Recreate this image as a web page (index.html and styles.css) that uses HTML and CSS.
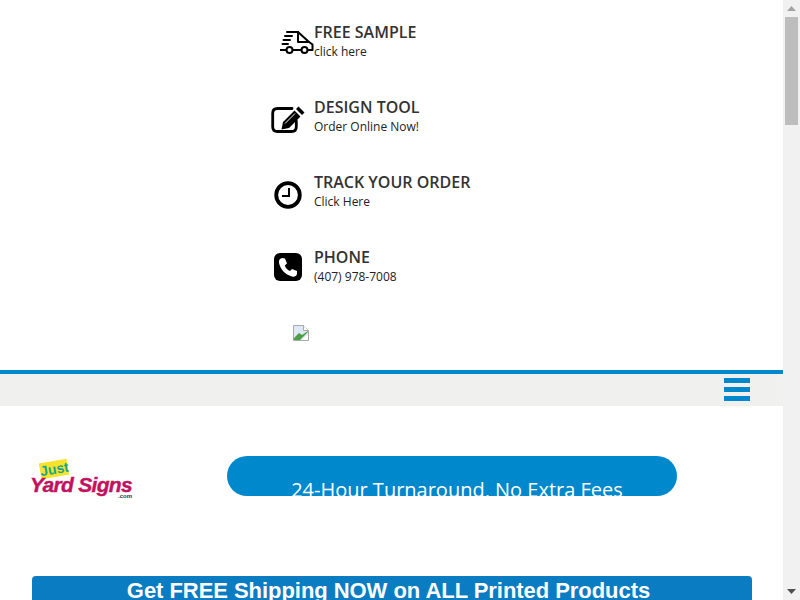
FILE: index.html
```html
<!DOCTYPE html>
<html lang="en">
<head>
    <meta charset="UTF-8">
    <meta name="viewport" content="width=device-width, initial-scale=1.0">
    <title>Just Yard Signs</title>
    <link rel="stylesheet" href="styles.css">
</head>
<body>
    <header class="top-links">
        <a class="top-link" href="#">
            <span class="top-icon top-icon-truck">
                <svg width="34" height="24" viewBox="0 0 34 24" fill="none" stroke="#000" stroke-width="2" stroke-linecap="round" stroke-linejoin="round">
                    <path d="M7 2H18L29 12L32.5 14.5V20H28.5"/>
                    <path d="M18 2V12H29"/>
                    <path d="M5 6H12M3.5 10H10M2.5 14H8"/>
                    <path d="M0.5 20H6M13 20H20.5"/>
                    <circle cx="9.5" cy="20" r="3"/>
                    <circle cx="24.5" cy="20" r="3"/>
                </svg>
            </span>
            <span class="top-text">
                <span class="top-title">FREE SAMPLE</span>
                <span class="top-sub">click here</span>
            </span>
        </a>
        <a class="top-link" href="#">
            <span class="top-icon top-icon-edit">
                <svg width="34" height="27" viewBox="0 0 34 27" fill="none">
                    <path d="M21 2.5H6.5C3.5 2.5 1.7 4.3 1.7 7.3V20.7C1.7 23.7 3.5 25.5 6.5 25.5H20.5C23.5 25.5 25.3 23.7 25.3 20.7V15" stroke="#000" stroke-width="2.8" stroke-linecap="round"/>
                    <path d="M27.5 0.5L33.5 6.5L31 9L25 3ZM23.5 4.5L29.5 10.5L18 22L10.5 23.5L12 16Z" fill="#000"/>
                    <path d="M14 17.5L24 7.5" stroke="#fff" stroke-width="1"/>
                </svg>
            </span>
            <span class="top-text">
                <span class="top-title">DESIGN TOOL</span>
                <span class="top-sub">Order Online Now!</span>
            </span>
        </a>
        <a class="top-link" href="#">
            <span class="top-icon top-icon-clock">
                <svg width="28" height="28" viewBox="0 0 28 28" fill="none" stroke="#000">
                    <circle cx="14" cy="14" r="11.8" stroke-width="3.8"/>
                    <path d="M15 7V15H8" stroke-width="2"/>
                </svg>
            </span>
            <span class="top-text">
                <span class="top-title">TRACK YOUR ORDER</span>
                <span class="top-sub">Click Here</span>
            </span>
        </a>
        <a class="top-link" href="#">
            <span class="top-icon top-icon-phone">
                <svg width="28" height="28" viewBox="0 0 28 28">
                    <rect width="28" height="28" rx="6" fill="#000"/>
                    <path d="M8 5L11 5.5L13 10.5L10.8 12.5C12 15.5 13 16.5 16 18L18 16L23 18V21C22.5 23.5 20 24 18 23.5C11 21.5 6.5 16.5 5 10C4.5 7.5 5.5 5.5 8 5Z" fill="#fff"/>
                </svg>
            </span>
            <span class="top-text">
                <span class="top-title">PHONE</span>
                <span class="top-sub">(407) 978-7008</span>
            </span>
        </a>
        <div class="broken-image">
            <svg width="16" height="16" viewBox="0 0 16 16">
                <path d="M0.5 0.5H10.5L15.5 5.5V15.5H0.5Z" fill="#dfe8f6" stroke="#a9a9a9"/>
                <path d="M10.5 0.5V5.5H15.5" fill="#fff" stroke="#a9a9a9"/>
                <path d="M1 15V13L6 8L9 10L15 6V7L7 15Z" fill="#4c9f45"/>
                <path d="M9 15L15 9V15Z" fill="#fff"/>
            </svg>
        </div>
    </header>

    <nav class="nav-bar">
        <button class="menu-btn" aria-label="Menu">
            <span></span><span></span><span></span>
        </button>
    </nav>

    <section class="brand-row">
        <a class="logo" href="#">
            <span class="logo-just">Just</span>
            <span class="logo-name">Yard Signs</span>
            <span class="logo-com">.com</span>
        </a>
        <div class="promo-pill">
            <p>24-Hour Turnaround, No Extra Fees</p>
        </div>
    </section>

    <section class="shipping">
        <div class="shipping-banner">Get FREE Shipping NOW on ALL Printed Products</div>
    </section>

    <div class="scrollbar">
        <svg class="scroll-arrow" width="9" height="5" viewBox="0 0 9 5"><path d="M4.5 0L9 5H0Z" fill="#a3a3a3"/></svg>
        <div class="scroll-track"><div class="scroll-thumb"></div></div>
        <svg class="scroll-arrow" width="9" height="5" viewBox="0 0 9 5"><path d="M0 0H9L4.5 5Z" fill="#505050"/></svg>
    </div>
</body>
</html>
```

FILE: styles.css
```css
:root {
    --blue: #0088cc;
    --banner-blue: #0a7cc1;
    --grey-bar: #f0f0ee;
    --dark-text: #333;
}

body {
    margin: 0;
    padding-right: 17px;
    font-family: "Open Sans", "Liberation Sans", sans-serif;
    color: var(--dark-text);
    background-color: #fff;
}

/* drawn by hand, the window's own bar does not show up in the shot */
.scrollbar {
    position: fixed;
    top: 0;
    right: 0;
    bottom: 0;
    display: flex;
    flex-direction: column;
    align-items: center;
    width: 17px;
    background-color: #f1f1f1;
}

.scroll-arrow {
    flex: 0 0 17px;
}

.scroll-track {
    flex: 1;
    width: 13px;
}

.scroll-thumb {
    height: 108px;
    background-color: #bdbdbd;
}

.top-links {
    height: 370px;
    padding-left: 270px;
    box-sizing: border-box;
}

.top-link {
    display: flex;
    height: 75px;
    box-sizing: border-box;
    padding-top: 21px;
    color: var(--dark-text);
    text-decoration: none;
}

.top-icon {
    display: block;
    flex: 0 0 44px;
    box-sizing: border-box;
}

.top-icon svg {
    display: block;
}

.top-icon-truck {
    padding: 9px 0 0 10px;
}

.top-icon-edit {
    padding: 10px 0 0 1px;
}

.top-icon-clock {
    padding: 10px 0 0 4px;
}

.top-icon-phone {
    padding: 7px 0 0 4px;
}

.top-text {
    display: flex;
    flex-direction: column;
}

.top-title {
    font-size: 16px;
    font-weight: 600;
    line-height: 22px;
}

.top-sub {
    font-size: 12px;
    line-height: 17px;
    color: #222;
}

.broken-image {
    padding: 25px 0 0 23px;
}

.broken-image svg {
    display: block;
}

.nav-bar {
    display: flex;
    justify-content: flex-end;
    align-items: center;
    height: 31px;
    padding: 0 33px 1px 0;
    border-top: 4px solid var(--blue);
    background-color: var(--grey-bar);
}

.menu-btn {
    display: flex;
    flex-direction: column;
    gap: 4px;
    width: 26px;
    padding: 0;
    border: none;
    background: none;
}

.menu-btn span {
    display: block;
    height: 5px;
    background-color: var(--blue);
}

.brand-row {
    display: flex;
    height: 170px;
    box-sizing: border-box;
    padding: 50px 0 0 30px;
}

.logo {
    position: relative;
    display: block;
    flex: 0 0 102px;
    height: 42px;
    margin-top: 4px;
    text-decoration: none;
}

.logo-just {
    position: absolute;
    top: 1px;
    left: 10px;
    width: 28px;
    height: 16px;
    font: bold 14px/16px "Liberation Sans", sans-serif;
    text-align: center;
    color: #1ba58e;
    background-color: #f7e32b;
    transform: rotate(-10deg);
}

.logo-name {
    position: absolute;
    top: 14px;
    left: 0;
    font: italic bold 21px/22px "Liberation Sans", sans-serif;
    letter-spacing: -0.7px;
    -webkit-text-stroke: 0.4px #c2125e;
    white-space: nowrap;
    color: #c2125e;
}

.logo-com {
    position: absolute;
    top: 33px;
    right: 0;
    font: bold 6px/7px "Liberation Sans", sans-serif;
    color: #333;
}

.promo-pill {
    width: 450px;
    height: 40px;
    margin-left: 95px;
    overflow: hidden;
    border-radius: 20px;
    background-color: var(--blue);
}

.promo-pill p {
    margin: 20px 0 0;
    padding-left: 10px;
    font-size: 20px;
    line-height: 28px;
    text-align: center;
    color: #fff;
}

.shipping {
    padding: 0 31px 0 32px;
}

.shipping-banner {
    padding: 2px 7px 8px 0;
    border-radius: 4px;
    font: bold 22px/26px "Liberation Sans", sans-serif;
    letter-spacing: -0.05px;
    text-align: center;
    color: #fff;
    background-color: var(--banner-blue);
}
```
